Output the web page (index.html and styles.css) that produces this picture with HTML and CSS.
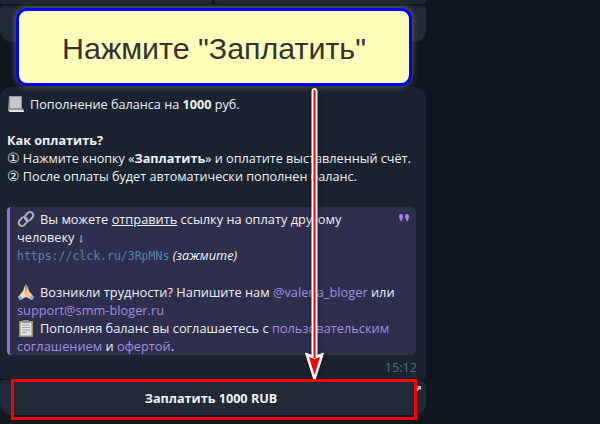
FILE: index.html
```html
<!DOCTYPE html>
<html lang="ru">
<head>
<meta charset="utf-8">
<title>Нажмите "Заплатить"</title>
<link rel="stylesheet" href="styles.css">
</head>
<body>
<div class="chat">
  <div class="keys-top">
    <div class="key-stub"></div>
    <div class="key-stub"></div>
  </div>
  <div class="key-wide"></div>
  <div class="bubble">
    <p class="line"><svg class="emoji" viewBox="0 0 18 18"><path d="M2 1h13v12l2 2v2H3l-2-2z" fill="#8d9499"/><path d="M3 2h11v11H3z" fill="#c4c9cb"/><path d="M1 15h15l1 2H3z" fill="#e4e6e6"/></svg>Пополнение баланса на <b>1000</b> руб.</p>
    <p class="line blank"></p>
    <p class="line"><b>Как оплатить?</b></p>
    <p class="line"><span class="num">①</span> Нажмите кнопку «<b>Заплатить</b>» и оплатите выставленный счёт.</p>
    <p class="line"><span class="num">②</span> После оплаты будет автоматически пополнен баланс.</p>
    <p class="line blank"></p>
    <div class="quote">
      <svg class="mark" viewBox="0 0 10 8"><path d="M0 2a2 2 0 0 1 4 0c0 2.500-1 4.500-2 6 0-2-2-3-2-6zM6 2a2 2 0 0 1 4 0c0 2.500-1 4.500-2 6 0-2-2-3-2-6z" fill="#a880f5"/></svg>
      <p class="line"><svg class="emoji" viewBox="0 0 18 18"><g fill="none" stroke="#aab2b8" stroke-width="2"><rect x="9" y="1.500" width="6.500" height="9.500" rx="3.200" transform="rotate(40 12 6)"/><rect x="2.500" y="7" width="6.500" height="9.500" rx="3.200" transform="rotate(40 6 12)"/></g></svg>Вы можете <u>отправить</u> ссылку на оплату другому<br>человеку ↓</p>
      <p class="line"><a class="mono">https://clck.ru/3RpMNs</a> <i>(зажмите)</i></p>
      <p class="line blank"></p>
      <p class="line"><svg class="emoji" viewBox="0 0 18 18"><path d="M8.500 1L6 8 1 14l2 3 6-3z" fill="#fbd7b0"/><path d="M9.500 1L12 8l5 6-2 3-6-3z" fill="#f3c79a"/><path d="M1 14l2 3 3-1-3-4zM17 14l-2 3-3-1 3-4z" fill="#7db2e0"/></svg>Возникли трудности? Напишите нам <a>@valeria_bloger</a> или <a>support@smm-bloger.ru</a></p>
      <p class="line"><svg class="emoji" viewBox="0 0 18 18"><path d="M2 2h14v16H2z" fill="#a58a64"/><path d="M3.500 3.500h11v13h-11z" fill="#dfe2e2"/><path d="M6 1h6v3H6z" fill="#8b9196"/><path d="M5 6h8M5 8.500h8M5 11h8M5 13.500h5" stroke="#9fa4a8"/></svg>Пополняя баланс вы соглашаетесь с <a>пользовательским</a><br><a>соглашением</a> и <a>офертой</a>.</p>
    </div>
    <div class="time">15:12</div>
  </div>
  <div class="key-pay">Заплатить 1000 RUB<svg class="key-corner" viewBox="0 0 6 6"><path d="M1 0h5v5L4.500 3.500 1.500 6 0 4.500l2.500-3z" fill="#b4babf"/></svg></div>
</div>

<div class="callout">Нажмите "Заплатить"</div>
<svg class="arrow" width="30" height="300" viewBox="0 0 30 300">
  <path d="M5.500 265L12 267.500V3a2.500 2.500 0 0 1 5 0v264.500l6.500-2.500-9 28.500z" fill="#fff" stroke="#fff" stroke-width="1" stroke-linejoin="round"/>
  <path d="M13.500 2h2v268h-2z" fill="#f00"/>
  <path d="M9 269l5.500 2 5.500-2-5.500 18z" fill="#f00"/>
</svg>
<div class="highlight"></div>
</body>
</html>
```
FILE: styles.css
```css
* { box-sizing: border-box; }
html, body { margin: 0; padding: 0; }
body {
  width: 600px;
  height: 424px;
  overflow: hidden;
  background: #10161f;
  position: relative;
  font-family: "Open Sans", "Noto Sans", sans-serif;
  font-size: 12.65px;
  color: #eef1f4;
}
.chat { width: 426px; }
.keys-top { display: flex; gap: 3px; height: 4px; }
.key-stub {
  flex: 1;
  background: #1d2732;
  border-radius: 0 0 6px 6px;
}
.key-wide {
  height: 36px;
  margin-top: 2px;
  background: #1f2a36;
  border-radius: 4px 4px 12px 12px;
}
.bubble {
  margin-top: 45px;
  height: 292px;
  padding: 8px 10px 0 7px;
  background: #1a2430;
  border-radius: 12px 12px 4px 4px;
  position: relative;
}
.line {
  margin: 0;
  line-height: 18px;
  min-height: 18px;
}
.line b, .key-pay { font-weight: 700; }
.num { font-family: "DejaVu Sans", sans-serif; font-size: 14px; line-height: 1; }
.emoji {
  width: 18px;
  height: 18px;
  margin-right: 5px;
  vertical-align: top;
}
.quote {
  position: relative;
  height: 148px;
  margin-top: 4px;
  padding: 3px 10px 0 7px;
  background: #2d2f4d;
  border-left: 3px solid #8f74d0;
  border-radius: 4px 6px 6px 4px;
  font-size: 12.8px;
}
.mark {
  position: absolute;
  top: 7px;
  right: 7px;
  width: 10px;
  height: 8px;
}
.quote a { color: #a08ee6; }
.quote .mono {
  font-family: "DejaVu Sans Mono", monospace;
  font-size: 11.500px;
  color: #5585a5;
}
.time {
  position: absolute;
  right: 9px;
  bottom: 3px;
  font-size: 12.65px;
  color: #5a6a78;
}
.key-pay {
  position: relative;
  height: 35px;
  margin-top: 1px;
  padding-right: 4px;
  background: #1f2a36;
  border-radius: 4px 8px 12px 12px;
  display: flex;
  align-items: center;
  justify-content: center;
}
.key-corner {
  position: absolute;
  top: 6px;
  right: 5px;
  width: 5px;
  height: 5px;
}
.callout {
  position: absolute;
  left: 16px;
  top: 8px;
  width: 396px;
  height: 78px;
  padding-top: 2px;
  display: flex;
  align-items: center;
  justify-content: center;
  background: #ffffbb;
  border: 3px solid #0000ff;
  border-radius: 11px;
  box-shadow: 0 0 6px rgba(255, 255, 190, 0.35);
  font-family: "Liberation Sans", sans-serif;
  font-size: 30.4px;
  color: #333333;
}
.arrow {
  position: absolute;
  left: 300px;
  top: 88px;
  filter: drop-shadow(0 0 3px rgba(0, 0, 0, 0.35));
}
.highlight {
  position: absolute;
  left: 11px;
  top: 379px;
  width: 406px;
  height: 41px;
  border: 3px solid #ff0000;
}
```
